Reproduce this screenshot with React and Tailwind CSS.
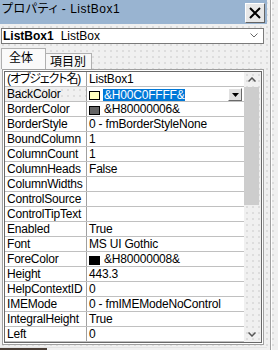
import React from "react";

const rows = [
  ["(オブジェクト名)", "ListBox1"],
  ["BackColor", "&H00C0FFFF&", "#ffffc0", true],
  ["BorderColor", "&H80000006&", "#646464"],
  ["BorderStyle", "0 - fmBorderStyleNone"],
  ["BoundColumn", "1"],
  ["ColumnCount", "1"],
  ["ColumnHeads", "False"],
  ["ColumnWidths", ""],
  ["ControlSource", ""],
  ["ControlTipText", ""],
  ["Enabled", "True"],
  ["Font", "MS UI Gothic"],
  ["ForeColor", "&H80000008&", "#000000"],
  ["Height", "443.3"],
  ["HelpContextID", "0"],
  ["IMEMode", "0 - fmIMEModeNoControl"],
  ["IntegralHeight", "True"],
  ["Left", "0"],
];

const dots =
  "bg-[#f0f0f0] bg-[radial-gradient(circle,#d2d2d2_0.6px,transparent_0.9px)] bg-[length:6px_6px]";

function Chevron({ up }) {
  return (
    <svg width="8" height="5" viewBox="0 0 8 5">
      <polyline
        points={up ? "0.5,4.5 4,1 7.5,4.5" : "0.5,0.5 4,4 7.5,0.5"}
        fill="none"
        stroke="#555"
        strokeWidth="1.5"
      />
    </svg>
  );
}

function Row({ name, value, swatch, selected, first }) {
  return (
    <div className="flex h-[15px] border-b border-[#c0c0c0]">
      <div
        className={`w-[82px] shrink-0 border-r border-[#a0a0a0] pl-[2px] leading-[14px] whitespace-nowrap overflow-hidden ${
          selected ? dots : ""
        } ${first ? "tracking-[-1.1px]" : ""}`}
      >
        {name}
      </div>
      <div className="flex-1 flex items-start pl-[2px] leading-[14px] whitespace-nowrap overflow-hidden">
        {swatch && (
          <div
            className="mt-[4px] w-[11px] h-[9px] border border-[#000] shrink-0"
            style={{ backgroundColor: swatch }}
          />
        )}
        {selected ? (
          <>
            <span className="ml-[3px] mt-[2px] h-[12px] leading-[12px] px-[1px] bg-[#0078d7] text-white">
              {value}
            </span>
            <div className="flex-1" />
            <div className="mt-[1px] mr-[2px] w-[14px] h-[13px] bg-[#e1e1e1] border-t border-l border-white border-r border-b border-r-[#696969] border-b-[#696969] flex items-center justify-center">
              <svg width="7" height="4" viewBox="0 0 7 4">
                <polygon points="0,0 7,0 3.5,4" fill="#000" />
              </svg>
            </div>
          </>
        ) : (
          <span className={swatch ? "ml-[4px]" : ""}>{value}</span>
        )}
      </div>
    </div>
  );
}

export default function App() {
  return (
    <div
      className={`w-[278px] h-[350px] overflow-hidden flex text-black ${dots} font-['Liberation_Sans','Noto_Sans_CJK_JP',sans-serif] [font-feature-settings:'palt']`}
    >
      <div className="w-[267px] shrink-0 flex flex-col">
        {/* title bar */}
        <div className="h-[24px] bg-[#99b4d1] flex justify-between shrink-0">
          <div className="pl-[2px] pt-[1px] text-[12px] leading-[16px] tracking-[0.5px]">
            プロパティ - ListBox1
          </div>
          <div className="mt-[3px] mr-[2px] w-[20px] h-[20px] bg-[#e8e8e8] border-t border-l border-white border-r border-b border-r-[#646464] border-b-[#646464] flex items-center justify-center">
            <svg width="12" height="12" viewBox="0 0 12 12">
              <path d="M1 1 L11 11 M11 1 L1 11" stroke="#000" strokeWidth="2" />
            </svg>
          </div>
        </div>
        {/* object combo */}
        <div className="mt-[4px] ml-[1px] w-[263px] h-[16px] bg-white border border-[#7a7a7a] flex items-center text-[12px] leading-[14px]">
          <span className="pl-[1px] font-bold">ListBox1</span>
          <span className="pl-[7px]">ListBox</span>
          <div className="flex-1" />
          <div className="mr-[5px] mb-[1px]">
            <svg width="8" height="5" viewBox="0 0 8 5">
              <polyline points="0.5,0.5 4,4 7.5,0.5" fill="none" stroke="#666" strokeWidth="1" />
            </svg>
          </div>
        </div>
        {/* tabs */}
        <div className="mt-[4px] h-[21px] flex items-start text-[12px]">
          <div className="ml-[1px] w-[45px] h-[21px] bg-[#fafafa] border-t border-l border-r border-[#b0b0b0] pl-[7px] pt-[2px] leading-[14px]">
            全体
          </div>
          <div className="mt-[5px] w-[46px] h-[16px] bg-[#f7f7f7] border-t border-r border-[#b0b0b0] pl-[4px] pt-[1px] leading-[14px]">
            項目別
          </div>
        </div>
        {/* grid */}
        <div className="ml-[2px] w-[262px] border border-[#a0a0a0] bg-white p-[1px]">
          <div className="border border-[#696969] flex text-[12px] tracking-[-0.2px]">
            <div className="w-[239px] shrink-0 flex flex-col">
              {rows.map((r, i) => (
                <Row
                  key={r[0]}
                  name={r[0]}
                  value={r[1]}
                  swatch={r[2]}
                  selected={r[3]}
                  first={i === 0}
                />
              ))}
            </div>
            <div className={`w-[17px] flex flex-col ${dots}`}>
              <div className="h-[15px] flex items-center justify-center pr-[2px]">
                <Chevron up />
              </div>
              <div className="h-[118px] w-[15px] bg-[#cdcdcd]" />
              <div className="flex-1" />
              <div className="h-[15px] flex items-center justify-center pr-[2px]">
                <Chevron />
              </div>
            </div>
          </div>
        </div>
        <div className="mt-[2px] h-[1px] bg-[#e4e4e4]" />
        <div className="mt-[1px] w-[47px] h-[4px] bg-[#4a3e36]" />
      </div>
      <div className="w-[3px]" />
      <div className="w-[1px] bg-[#a0a0a0]" />
      <div className="w-[1px] bg-white" />
    </div>
  );
}
